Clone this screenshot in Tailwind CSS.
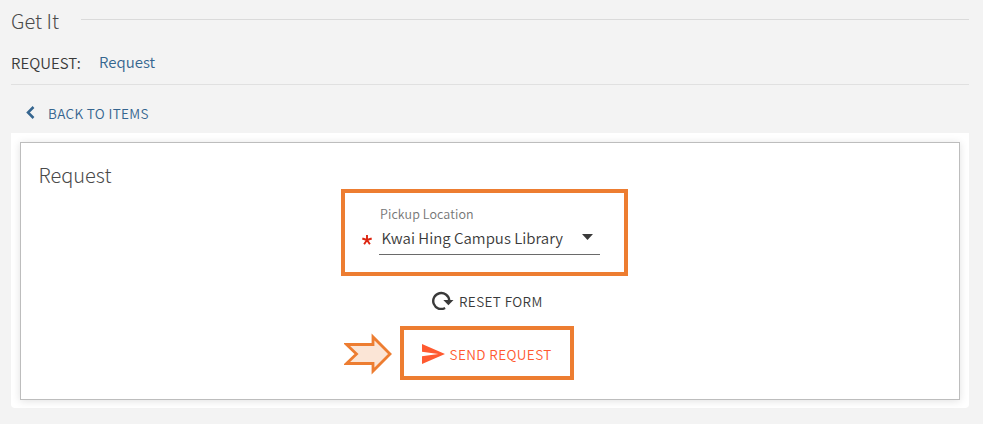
<!DOCTYPE html>
<html lang="en">
<head>
    <meta charset="UTF-8">
    <meta name="viewport" content="width=device-width, initial-scale=1.0">
    <title>Get It - Request</title>
    <script src="https://cdn.jsdelivr.net/npm/@tailwindcss/browser@4"></script>
</head>
<body class="bg-[#f3f3f3] h-[424px] overflow-hidden pl-[11px] pr-[14px] text-[#3a3a3a] font-['Noto_Sans_CJK_SC','Noto_Sans',sans-serif] font-[350]">

    <!-- Section title -->
    <header class="flex items-center h-[39px]">
        <h2 class="w-[70px] shrink-0 text-[20px] leading-[39px] font-light whitespace-nowrap pt-0.5 text-[#4a4a4a]">Get It</h2>
        <div class="grow h-px bg-[#dadada]"></div>
    </header>

    <!-- Request types -->
    <div class="flex h-[46px] border-b border-[#e0e0e0] text-[15px] leading-[45px] whitespace-nowrap">
        <span class="w-[88px] pt-px">REQUEST:</span>
        <a href="#" class="text-[#35658f]">Request</a>
    </div>

    <a href="#" class="flex items-center h-12 pt-[9px] pl-[14px] text-[#35658f]">
        <svg class="w-[10px] h-[13px] mb-[3px]" viewBox="0 0 10 13" fill="none" stroke="currentColor" stroke-width="2.5"><path d="M8.5 1 3 6.5 8.5 12"/></svg>
        <span class="ml-[13px] text-[13.5px] tracking-[0.35px] whitespace-nowrap">BACK TO ITEMS</span>
    </a>

    <main class="h-[275px] bg-white rounded-b-sm p-[9px] pb-2">
        <section class="h-full border border-[#bdbdbd] shadow-[0_1px_8px_rgba(0,0,0,0.12)] bg-white">
            <h3 class="h-[46px] pl-[17.5px] pt-3 text-[20px] leading-10 font-light text-[#4a4a4a]">Request</h3>

            <form class="flex flex-col">
                <div class="ml-80 w-[287px] h-[87px] border-4 border-[#ed7d31] pt-[11px] pl-[17px]">
                    <label class="block ml-[18px] text-[12.5px] leading-5 tracking-[0.1px] text-[#757575]">Pickup Location</label>
                    <div class="flex items-center">
                        <svg class="w-2.5 h-2.5 mt-px text-[#dd2510]" viewBox="0 0 10 10" fill="none" stroke="currentColor" stroke-width="1.9"><path d="M5 5V0M5 5 .3 3.5M5 5l4.7-1.5M5 5l2.9 4.2M5 5 2.1 9.2"/></svg>
                        <div class="flex items-center ml-[7px] w-[221px] h-[31px] border-b border-[#6a6a6a] pl-[2.5px] pr-[7px]">
                            <span class="grow text-[15px] leading-7 mb-0.5 whitespace-nowrap">Kwai Hing Campus Library</span>
                            <svg class="w-[11px] h-1.5 mb-1" viewBox="0 0 11 6" fill="currentColor"><path d="M0 0h11L5.5 6z"/></svg>
                        </div>
                    </div>
                </div>

                <button type="reset" class="flex items-center ml-[411px] h-[50px] w-28">
                    <svg class="w-[22px] h-[19px] mb-0.5" viewBox="0 0 22 19" fill="none"><path d="M13.1 17A8 8 0 1 1 17.2 9.2" stroke="currentColor" stroke-width="2.4"/><path d="M11.3 9H21.5l-5.1 5.3z" fill="currentColor"/></svg>
                    <span class="ml-[5px] text-[13.5px] tracking-[0.4px] whitespace-nowrap">RESET FORM</span>
                </button>

                <div class="flex items-center ml-[323px]">
                    <svg class="w-12 h-[42px] mt-px" viewBox="0 0 48 42" fill="#fbe5d6" stroke="#ed7d31" stroke-width="2.8"><path d="M2.5 11.5H29V4l17 17-17 17v-7.5H2.5L12.5 21z"/></svg>
                    <button type="submit" class="flex items-center ml-2 w-[174px] h-[54px] border-4 border-[#ed7d31] pl-[18px] text-[#ff5a30]">
                        <svg class="w-[23px] h-5 mt-px" viewBox="0 0 23 20" fill="currentColor"><path d="M0 0v7.8L16.4 10 0 12.2V20l23-10z"/></svg>
                        <span class="ml-[4.5px] text-[13.5px] tracking-[0.4px] whitespace-nowrap mt-0.5">SEND REQUEST</span>
                    </button>
                </div>
            </form>
        </section>
    </main>

</body>
</html>
